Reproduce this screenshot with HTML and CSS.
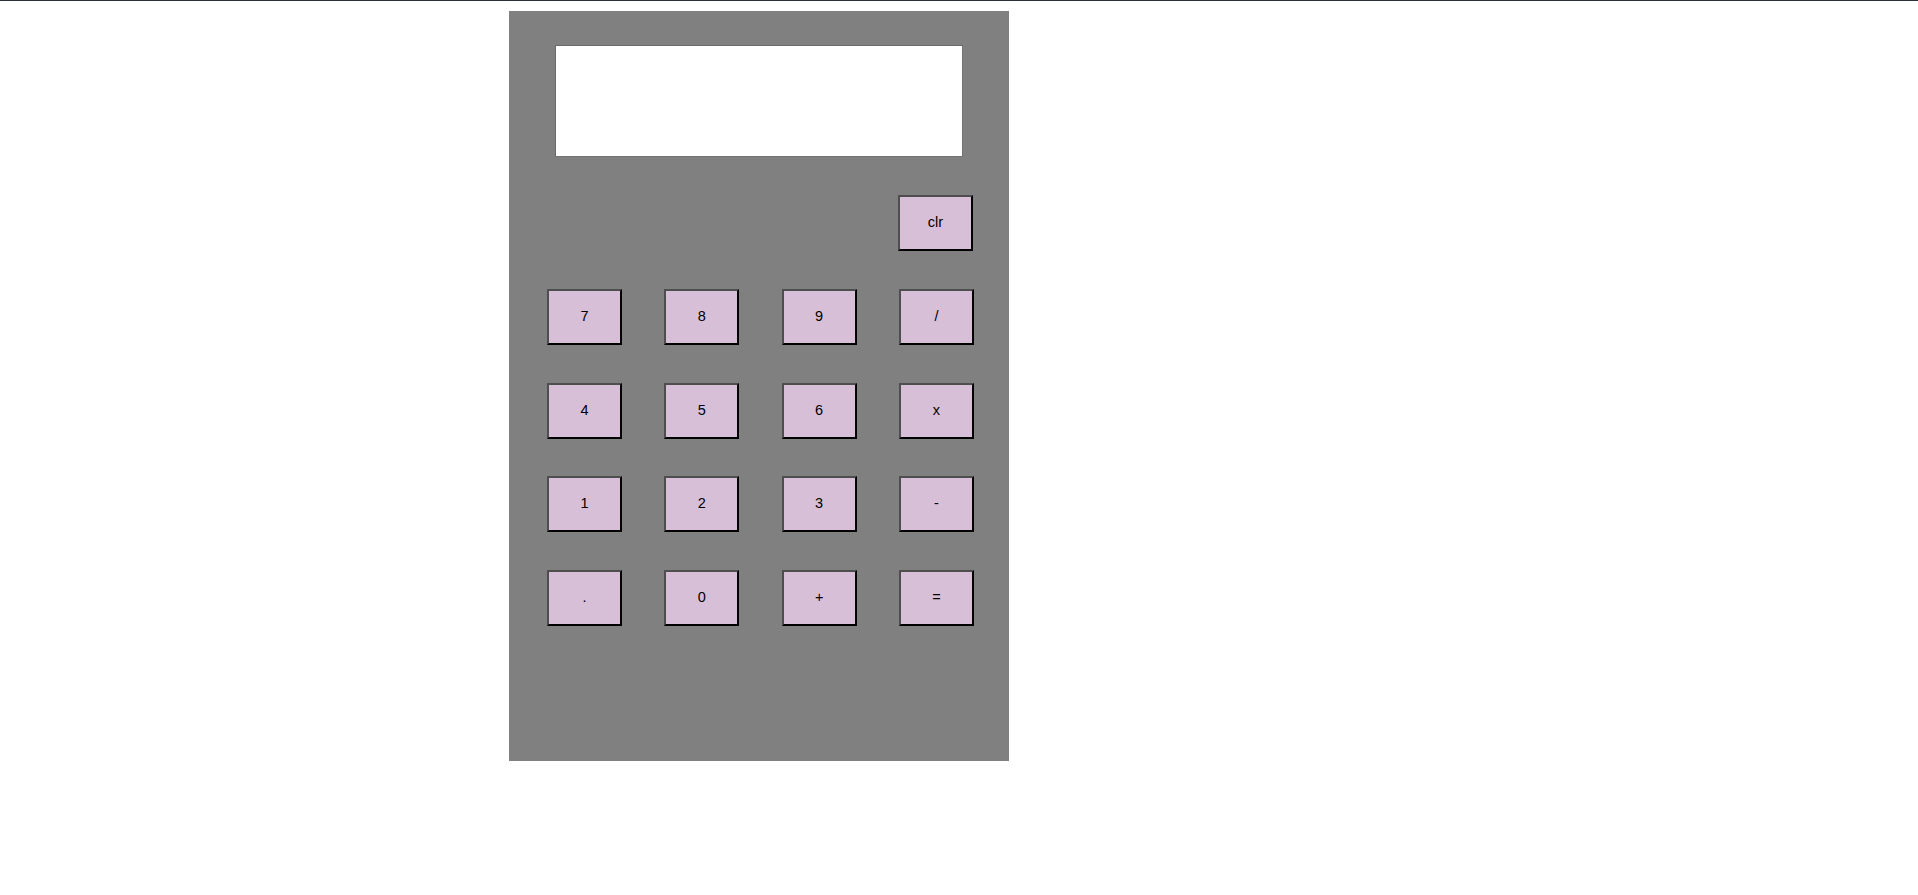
FILE: index.html
```html
<!DOCTYPE html>
<html>
<head>
<meta charset="utf-8">
<title>Calculator</title>
<link rel="stylesheet" href="styles.css">
</head>
<body>
<div class="topline"></div>
<div class="calc">
  <div class="display"></div>
  <div class="keys">
    <button class="key key-clr">clr</button>
    <button class="key">7</button>
    <button class="key">8</button>
    <button class="key">9</button>
    <button class="key">/</button>
    <button class="key">4</button>
    <button class="key">5</button>
    <button class="key">6</button>
    <button class="key">x</button>
    <button class="key">1</button>
    <button class="key">2</button>
    <button class="key">3</button>
    <button class="key">-</button>
    <button class="key">.</button>
    <button class="key">0</button>
    <button class="key">+</button>
    <button class="key">=</button>
  </div>
</div>
</body>
</html>
```
FILE: styles.css
```css
html, body {
  margin: 0;
  padding: 0;
  background: #ffffff;
}

.topline {
  height: 1px;
  background: #2b2f3a;
}

.calc {
  width: 500px;
  height: 750px;
  margin: 10px 0 0 509px;
  background: #808080;
  box-sizing: border-box;
  padding-top: 34px;
}

.display {
  width: 408px;
  height: 112px;
  margin: 0 auto;
  background: #ffffff;
  box-sizing: border-box;
  border-top: 1px solid #6a6a6a;
  border-left: 1px solid #6a6a6a;
  border-right: 1px solid #737373;
  border-bottom: 1px solid #737373;
}

.keys {
  display: grid;
  grid-template-columns: repeat(4, 75px);
  grid-auto-rows: 56px;
  justify-content: space-between;
  row-gap: 37.75px;
  width: 427px;
  margin: 38px 0 0 38px;
}

.key {
  margin: 0;
  padding: 0 0 2px 0;
  width: 75px;
  height: 56px;
  box-sizing: border-box;
  background: #d8bfd8;
  color: #000000;
  font-family: "Liberation Sans", Arial, sans-serif;
  font-size: 14.5px;
  border-width: 2px;
  border-style: solid;
  border-color: #4e4e4e #000000 #000000 #4e4e4e;
  border-radius: 0;
  cursor: pointer;
}

.key-clr {
  grid-column: 4;
  margin-left: -1px;
}
```
